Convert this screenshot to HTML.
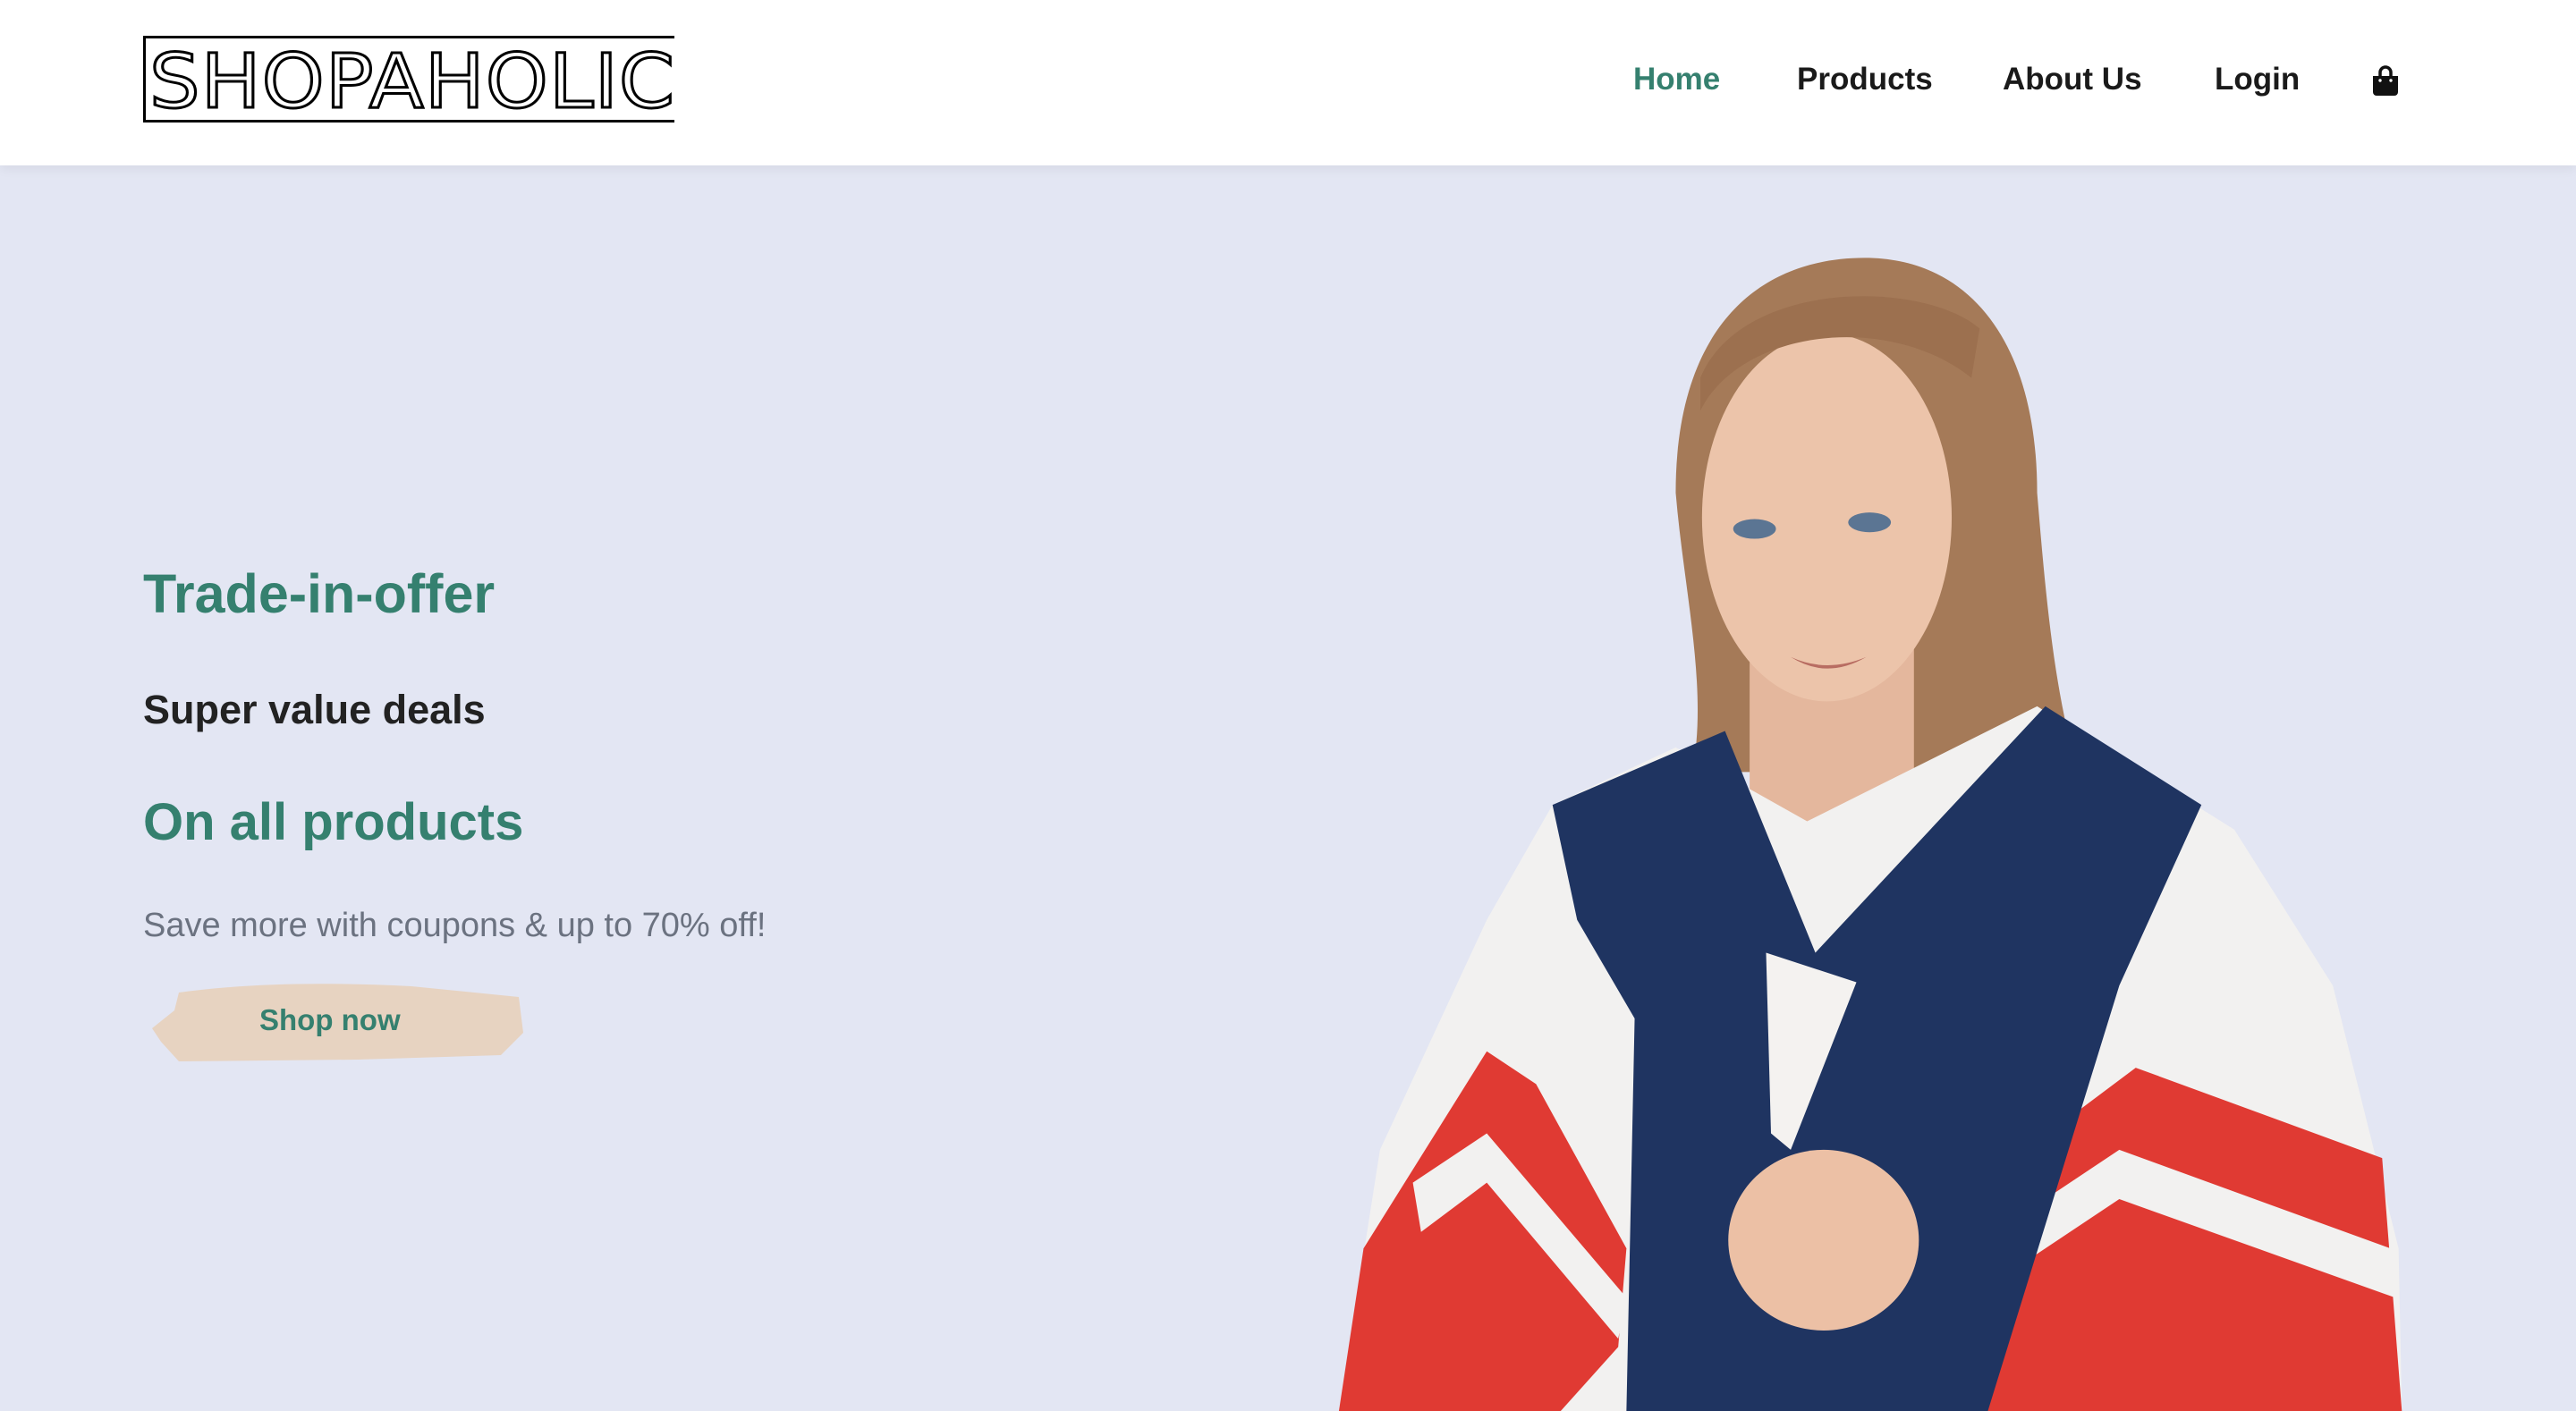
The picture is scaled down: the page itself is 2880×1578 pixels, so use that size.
<!DOCTYPE html>
<html><head><meta charset="utf-8"><style>
*{margin:0;padding:0;box-sizing:border-box}
html,body{width:2880px;height:1578px;overflow:hidden;background:#e3e6f3;font-family:"Liberation Sans",sans-serif}
header{position:absolute;left:0;top:0;width:2880px;height:185px;background:#fff;box-shadow:0 4px 12px rgba(0,0,0,0.06);z-index:2}
.logo{position:absolute;left:160px;top:40px;width:594px;height:97px;border:3px solid #000;border-right:none}
.logo span{position:absolute;left:4px;top:2px;font-size:84px;letter-spacing:1px;color:#fff;-webkit-text-stroke:3px #000;font-family:"DejaVu Sans",sans-serif;font-weight:normal;line-height:92px;transform:scaleX(1.06);transform-origin:left}
nav a{position:absolute;top:67px;font-size:35px;color:#1a1a1a;text-decoration:none;font-weight:bold;line-height:44px}
.h{position:absolute;left:160px;font-weight:bold;line-height:1}
</style></head><body>
<header>
<div class="logo"><span>SHOPAHOLIC</span></div>
<nav>
<a style="left:1826px;color:#35806f">Home</a>
<a style="left:2009px">Products</a>
<a style="left:2239px">About Us</a>
<a style="left:2476px">Login</a>
</nav>
<svg style="position:absolute;left:2650px;top:73px" width="34" height="36" viewBox="0 0 34 36"><path d="M11 12V8a6 6 0 0 1 12 0v4" fill="none" stroke="#111" stroke-width="3.5"/><path d="M3 12h28v18a4 4 0 0 1-4 4H7a4 4 0 0 1-4-4z" fill="#111"/><circle cx="11" cy="17" r="1.7" fill="#fff"/><circle cx="23" cy="17" r="1.7" fill="#fff"/></svg>
</header>

<svg style="position:absolute;left:0;top:0" width="2880" height="1578" viewBox="0 0 1568 859" preserveAspectRatio="none">
<path d="M1020 300 C1020 200 1070 157 1135 157 C1200 157 1240 210 1240 300 C1245 360 1250 420 1265 470 L1030 470 C1040 420 1025 360 1020 300Z" fill="#a57a58"/>
<rect x="1065" y="380" width="100" height="150" fill="#e4b79d"/>
<ellipse cx="1112" cy="315" rx="76" ry="112" fill="#ecc4aa"/>
<path d="M1035 250 C1060 200 1150 190 1200 230 L1205 200 C1170 170 1060 170 1035 230Z" fill="#9c704f"/>
<ellipse cx="1068" cy="322" rx="13" ry="6" fill="#5b7593"/>
<ellipse cx="1138" cy="318" rx="13" ry="6" fill="#5b7593"/>
<path d="M1090 400 Q1112 410 1136 400 Q1112 414 1090 400Z" fill="#b86d62"/>
<path d="M945 490 L1020 455 L1100 500 L1240 430 L1360 505 L1420 600 L1460 760 L1462 859 L815 859 L840 700 L905 560Z" fill="#f2f1f0"/>
<path d="M815 859 L830 760 L905 640 L935 660 L990 760 L985 820 L950 859Z" fill="#e03a33"/>
<path d="M860 720 L905 690 L990 790 L985 815 L905 720 L865 750Z" fill="#f2f1f0"/>
<path d="M1180 740 L1300 650 L1450 705 L1462 859 L1140 859Z" fill="#e03a33"/>
<path d="M1200 760 L1290 700 L1455 760 L1458 790 L1290 730 L1200 790Z" fill="#f2f1f0"/>
<path d="M945 490 L1050 445 L1105 580 L1245 430 L1340 490 L1290 600 L1210 859 L990 859 L995 620 L960 560Z" fill="#1f3461"/>
<path d="M1075 580 L1130 598 L1090 700 L1078 690Z" fill="#f4f2f0"/>
<ellipse cx="1110" cy="755" rx="58" ry="55" fill="#ecc0a5"/>
</svg>

<div class="h" style="top:634px;font-size:61px;color:#35806f">Trade-in-offer</div>
<div class="h" style="top:771px;font-size:45px;color:#222">Super value deals</div>
<div class="h" style="top:891px;font-size:58px;color:#35806f">On all products</div>
<div style="position:absolute;left:160px;top:1016px;font-size:38px;color:#6b7280;line-height:1">Save more with coupons &amp; up to 70% off!</div>
<svg style="position:absolute;left:160px;top:1095px" width="460" height="95" viewBox="0 0 460 95"><path d="M40 15 Q150 0 300 8 L420 20 L425 60 L400 85 L240 90 L40 92 L20 70 L10 55 L35 35Z" fill="#e7d3c1"/></svg>
<div style="position:absolute;left:290px;top:1124px;font-size:33px;font-weight:bold;color:#35806f;line-height:1">Shop now</div>
</body></html>
